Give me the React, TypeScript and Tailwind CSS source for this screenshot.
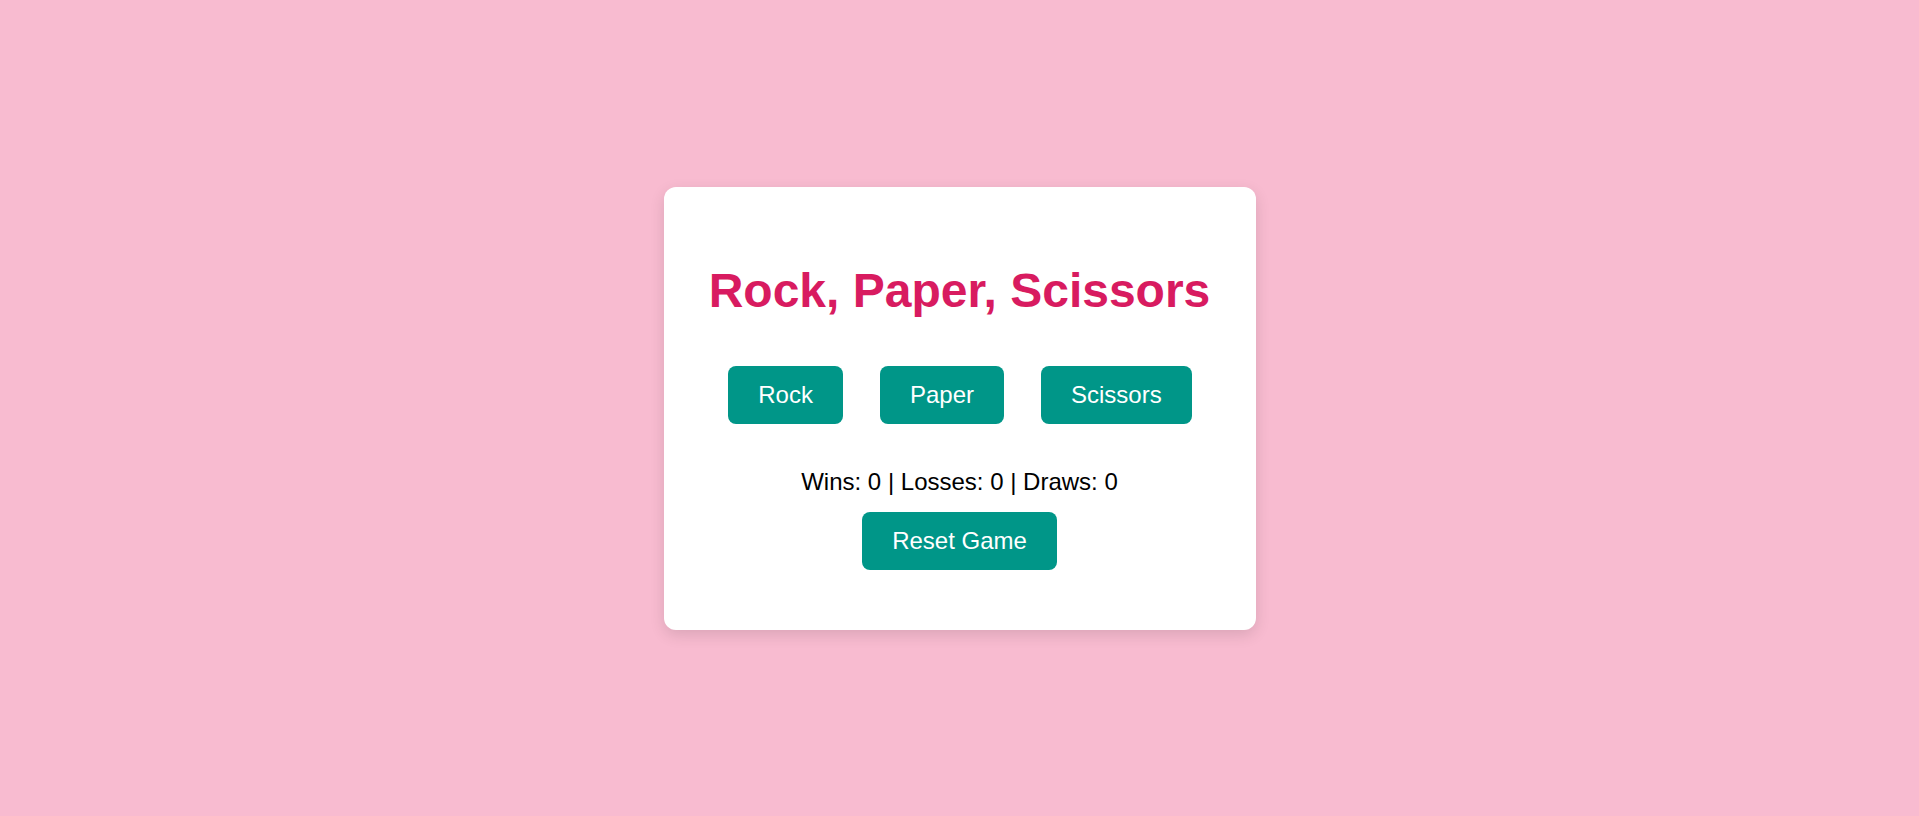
import React, { useState } from 'react';

type Choice = 'Rock' | 'Paper' | 'Scissors';

const choices: Choice[] = ['Rock', 'Paper', 'Scissors'];

const beats: Record<Choice, Choice> = {
  Rock: 'Scissors',
  Paper: 'Rock',
  Scissors: 'Paper',
};

export default function App() {
  const [score, setScore] = useState({ wins: 0, losses: 0, draws: 0 });

  const play = (choice: Choice) => {
    const computer = choices[Math.floor(Math.random() * choices.length)];
    if (choice === computer) {
      setScore((s) => ({ ...s, draws: s.draws + 1 }));
    } else if (beats[choice] === computer) {
      setScore((s) => ({ ...s, wins: s.wins + 1 }));
    } else {
      setScore((s) => ({ ...s, losses: s.losses + 1 }));
    }
  };

  const reset = () => setScore({ wins: 0, losses: 0, draws: 0 });

  return (
    <div
      className="min-h-screen w-full bg-[#f8bbd0] flex items-center justify-center"
      style={{ fontFamily: '"Liberation Sans", Arial, sans-serif' }}
    >
      <div className="w-[592px] h-[443px] bg-white rounded-[12px] shadow-[0_5px_15px_rgba(0,0,0,0.12)] flex flex-col items-center pt-[76px]">
        <h1 className="text-[48px] leading-[normal] font-bold text-[#d81b60]">
          Rock, Paper, Scissors
        </h1>

        <div className="flex gap-[37px] mt-[48px] pl-[1px]">
          {choices.map((c) => (
            <button
              key={c}
              onClick={() => play(c)}
              className="bg-[#009688] text-white text-[24px] leading-[normal] px-[30px] py-[15px] rounded-[8px] cursor-pointer"
            >
              {c}
            </button>
          ))}
        </div>

        <p className="mt-[44px] text-[24px] leading-[normal] text-black">
          Wins: {score.wins} | Losses: {score.losses} | Draws: {score.draws}
        </p>

        <button
          onClick={reset}
          className="mt-[16px] bg-[#009688] text-white text-[24px] leading-[normal] px-[30px] py-[15px] rounded-[8px] cursor-pointer"
        >
          Reset Game
        </button>
      </div>
    </div>
  );
}
